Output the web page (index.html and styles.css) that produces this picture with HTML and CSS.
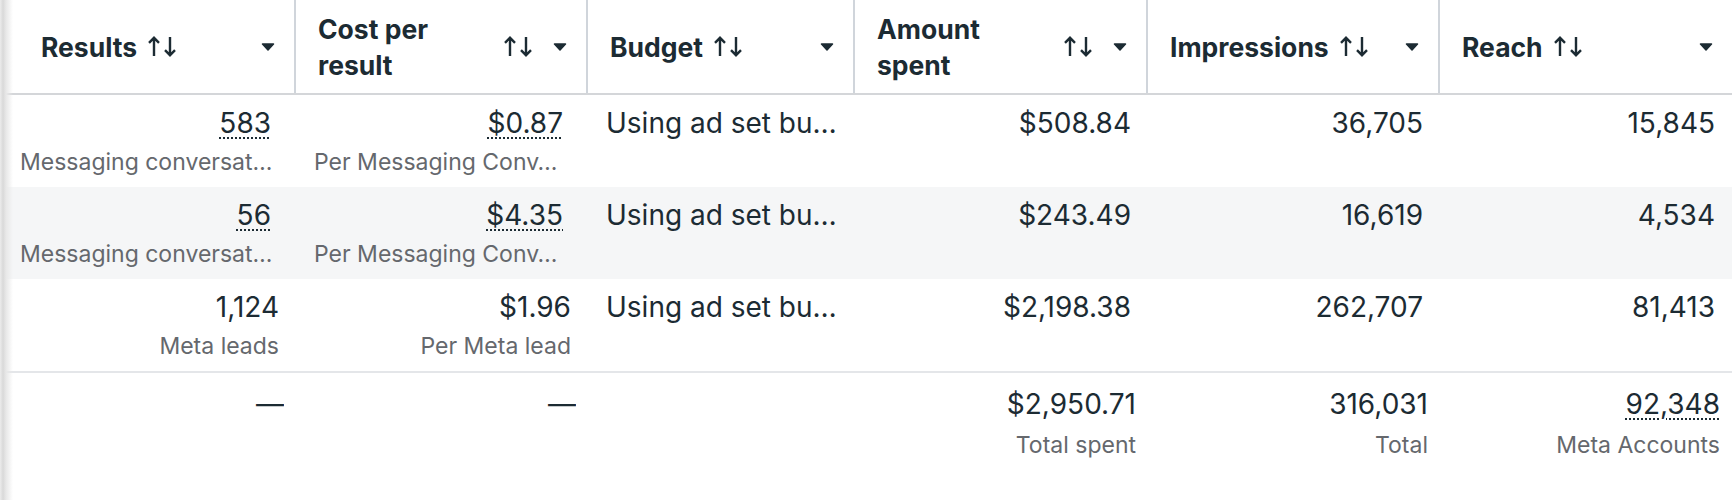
FILE: index.html
```html
<!DOCTYPE html>
<html lang="en">
<head>
    <meta charset="UTF-8">
    <meta name="viewport" content="width=device-width, initial-scale=1.0">
    <title>Ad sets report</title>
    <link rel="stylesheet" href="styles.css">
</head>
<body>
    <svg class="defs" width="0" height="0">
        <symbol id="sort" viewBox="0 0 28 21">
            <path d="M6 20V1.8M1 6.8L6 1.8L11 6.8" fill="none" stroke="currentColor" stroke-width="2.4"/>
            <path d="M22 1V19.2M17 14.2L22 19.2L27 14.2" fill="none" stroke="currentColor" stroke-width="2.4"/>
        </symbol>
        <symbol id="caret" viewBox="0 0 14 8">
            <path d="M1.5 1h11L7 7z" fill="currentColor" stroke="currentColor" stroke-width="1.5" stroke-linejoin="round"/>
        </symbol>
    </svg>

    <div class="table">
        <div class="row head">
            <div class="th first">
                <span class="label">Results</span>
                <svg class="sort"><use href="#sort"/></svg>
                <svg class="caret"><use href="#caret"/></svg>
            </div>
            <div class="th">
                <span class="label wrap">Cost per<br>result</span>
                <svg class="sort"><use href="#sort"/></svg>
                <svg class="caret"><use href="#caret"/></svg>
            </div>
            <div class="th">
                <span class="label">Budget</span>
                <svg class="sort"><use href="#sort"/></svg>
                <svg class="caret"><use href="#caret"/></svg>
            </div>
            <div class="th">
                <span class="label wrap">Amount<br>spent</span>
                <svg class="sort"><use href="#sort"/></svg>
                <svg class="caret"><use href="#caret"/></svg>
            </div>
            <div class="th">
                <span class="label">Impressions</span>
                <svg class="sort"><use href="#sort"/></svg>
                <svg class="caret"><use href="#caret"/></svg>
            </div>
            <div class="th">
                <span class="label">Reach</span>
                <svg class="sort"><use href="#sort"/></svg>
                <svg class="caret"><use href="#caret"/></svg>
            </div>
        </div>

        <div class="row tr">
            <div class="td linked first">
                <div class="val"><span class="dotted">583</span></div>
                <div class="sub">Messaging conversat…</div>
            </div>
            <div class="td linked">
                <div class="val"><span class="dotted">$0.87</span></div>
                <div class="sub">Per Messaging Conv…</div>
            </div>
            <div class="td text"><div class="val">Using ad set bu…</div></div>
            <div class="td"><div class="val">$508.84</div></div>
            <div class="td"><div class="val">36,705</div></div>
            <div class="td"><div class="val">15,845</div></div>
        </div>

        <div class="row tr alt">
            <div class="td linked first">
                <div class="val"><span class="dotted">56</span></div>
                <div class="sub">Messaging conversat…</div>
            </div>
            <div class="td linked">
                <div class="val"><span class="dotted">$4.35</span></div>
                <div class="sub">Per Messaging Conv…</div>
            </div>
            <div class="td text"><div class="val">Using ad set bu…</div></div>
            <div class="td"><div class="val">$243.49</div></div>
            <div class="td"><div class="val">16,619</div></div>
            <div class="td"><div class="val">4,534</div></div>
        </div>

        <div class="row tr">
            <div class="td first">
                <div class="val">1,124</div>
                <div class="sub">Meta leads</div>
            </div>
            <div class="td">
                <div class="val">$1.96</div>
                <div class="sub">Per Meta lead</div>
            </div>
            <div class="td text"><div class="val">Using ad set bu…</div></div>
            <div class="td"><div class="val">$2,198.38</div></div>
            <div class="td"><div class="val">262,707</div></div>
            <div class="td"><div class="val">81,413</div></div>
        </div>

        <div class="row tr total">
            <div class="td first"><div class="val">—</div></div>
            <div class="td"><div class="val">—</div></div>
            <div class="td text"></div>
            <div class="td">
                <div class="val">$2,950.71</div>
                <div class="sub">Total spent</div>
            </div>
            <div class="td">
                <div class="val">316,031</div>
                <div class="sub">Total</div>
            </div>
            <div class="td">
                <div class="val"><span class="dotted">92,348</span></div>
                <div class="sub">Meta Accounts</div>
            </div>
        </div>
    </div>
</body>
</html>
```

FILE: styles.css
```css
* {
    box-sizing: border-box;
}

body {
    margin: 0;
    font-family: Inter, 'Liberation Sans', sans-serif;
    color: #1c2b33;
    background-color: #fff;
}

.defs {
    position: absolute;
}

.table {
    position: relative;
    width: 1732px;
    height: 500px;
    overflow: hidden;
}

/* shadow of the frozen column on the left */
.table::before {
    content: "";
    position: absolute;
    left: 0;
    top: 0;
    bottom: 0;
    width: 13px;
    background: linear-gradient(to right, #ececec 0, #d9d9d9 3px, #e8e8e8 6px, rgba(255, 255, 255, 0) 13px);
    z-index: 2;
}

.row {
    display: grid;
    grid-template-columns: 296px 292px 267px 293px 292px 292px;
}

.head {
    height: 95px;
    border-bottom: 2px solid #d4d6d9;
}

.th {
    display: flex;
    align-items: center;
    padding: 0 19px 0 22px;
    border-right: 2px solid #d0d5db;
    font-size: 26.5px;
    font-weight: 700;
    line-height: 36px;
}

.th:last-child {
    border-right: none;
}

.th.first {
    padding-left: 41px;
}

.label {
    white-space: nowrap;
}

.label.wrap {
    flex: 1;
}

.sort {
    width: 28px;
    height: 21px;
    margin-left: 11px;
    flex: none;
    color: #1c2b33;
}

.caret {
    width: 14px;
    height: 8px;
    margin-left: auto;
    flex: none;
    color: #1c2b33;
}

.wrap ~ .caret {
    margin-left: 21px;
}

.tr {
    height: 92px;
}

.tr.alt {
    background-color: #f5f6f7;
}

.td {
    padding: 8px 17px 0 18px;
    text-align: right;
    overflow: hidden;
}

.td.first {
    padding-left: 20px;
}

.td.linked {
    padding-right: 25px;
}

.td.text {
    text-align: left;
}

.val {
    font-size: 28px;
    line-height: 40px;
    white-space: nowrap;
    overflow: hidden;
    text-overflow: ellipsis;
}

.sub {
    margin-top: 1px;
    font-size: 23px;
    line-height: 36px;
    color: #65686d;
    white-space: nowrap;
    overflow: hidden;
    text-overflow: ellipsis;
}

/* truncated labels start at the left edge of the cell */
.linked .sub {
    text-align: left;
    overflow: visible;
}

.dotted {
    text-decoration: underline dotted;
    text-decoration-thickness: 2px;
    text-underline-offset: 4px;
}

.total {
    height: 129px;
    border-top: 2px solid #e4e6e9;
}

.total .td {
    padding: 11px 12px 0 18px;
}

.total .sub {
    margin-top: 3px;
}
```
